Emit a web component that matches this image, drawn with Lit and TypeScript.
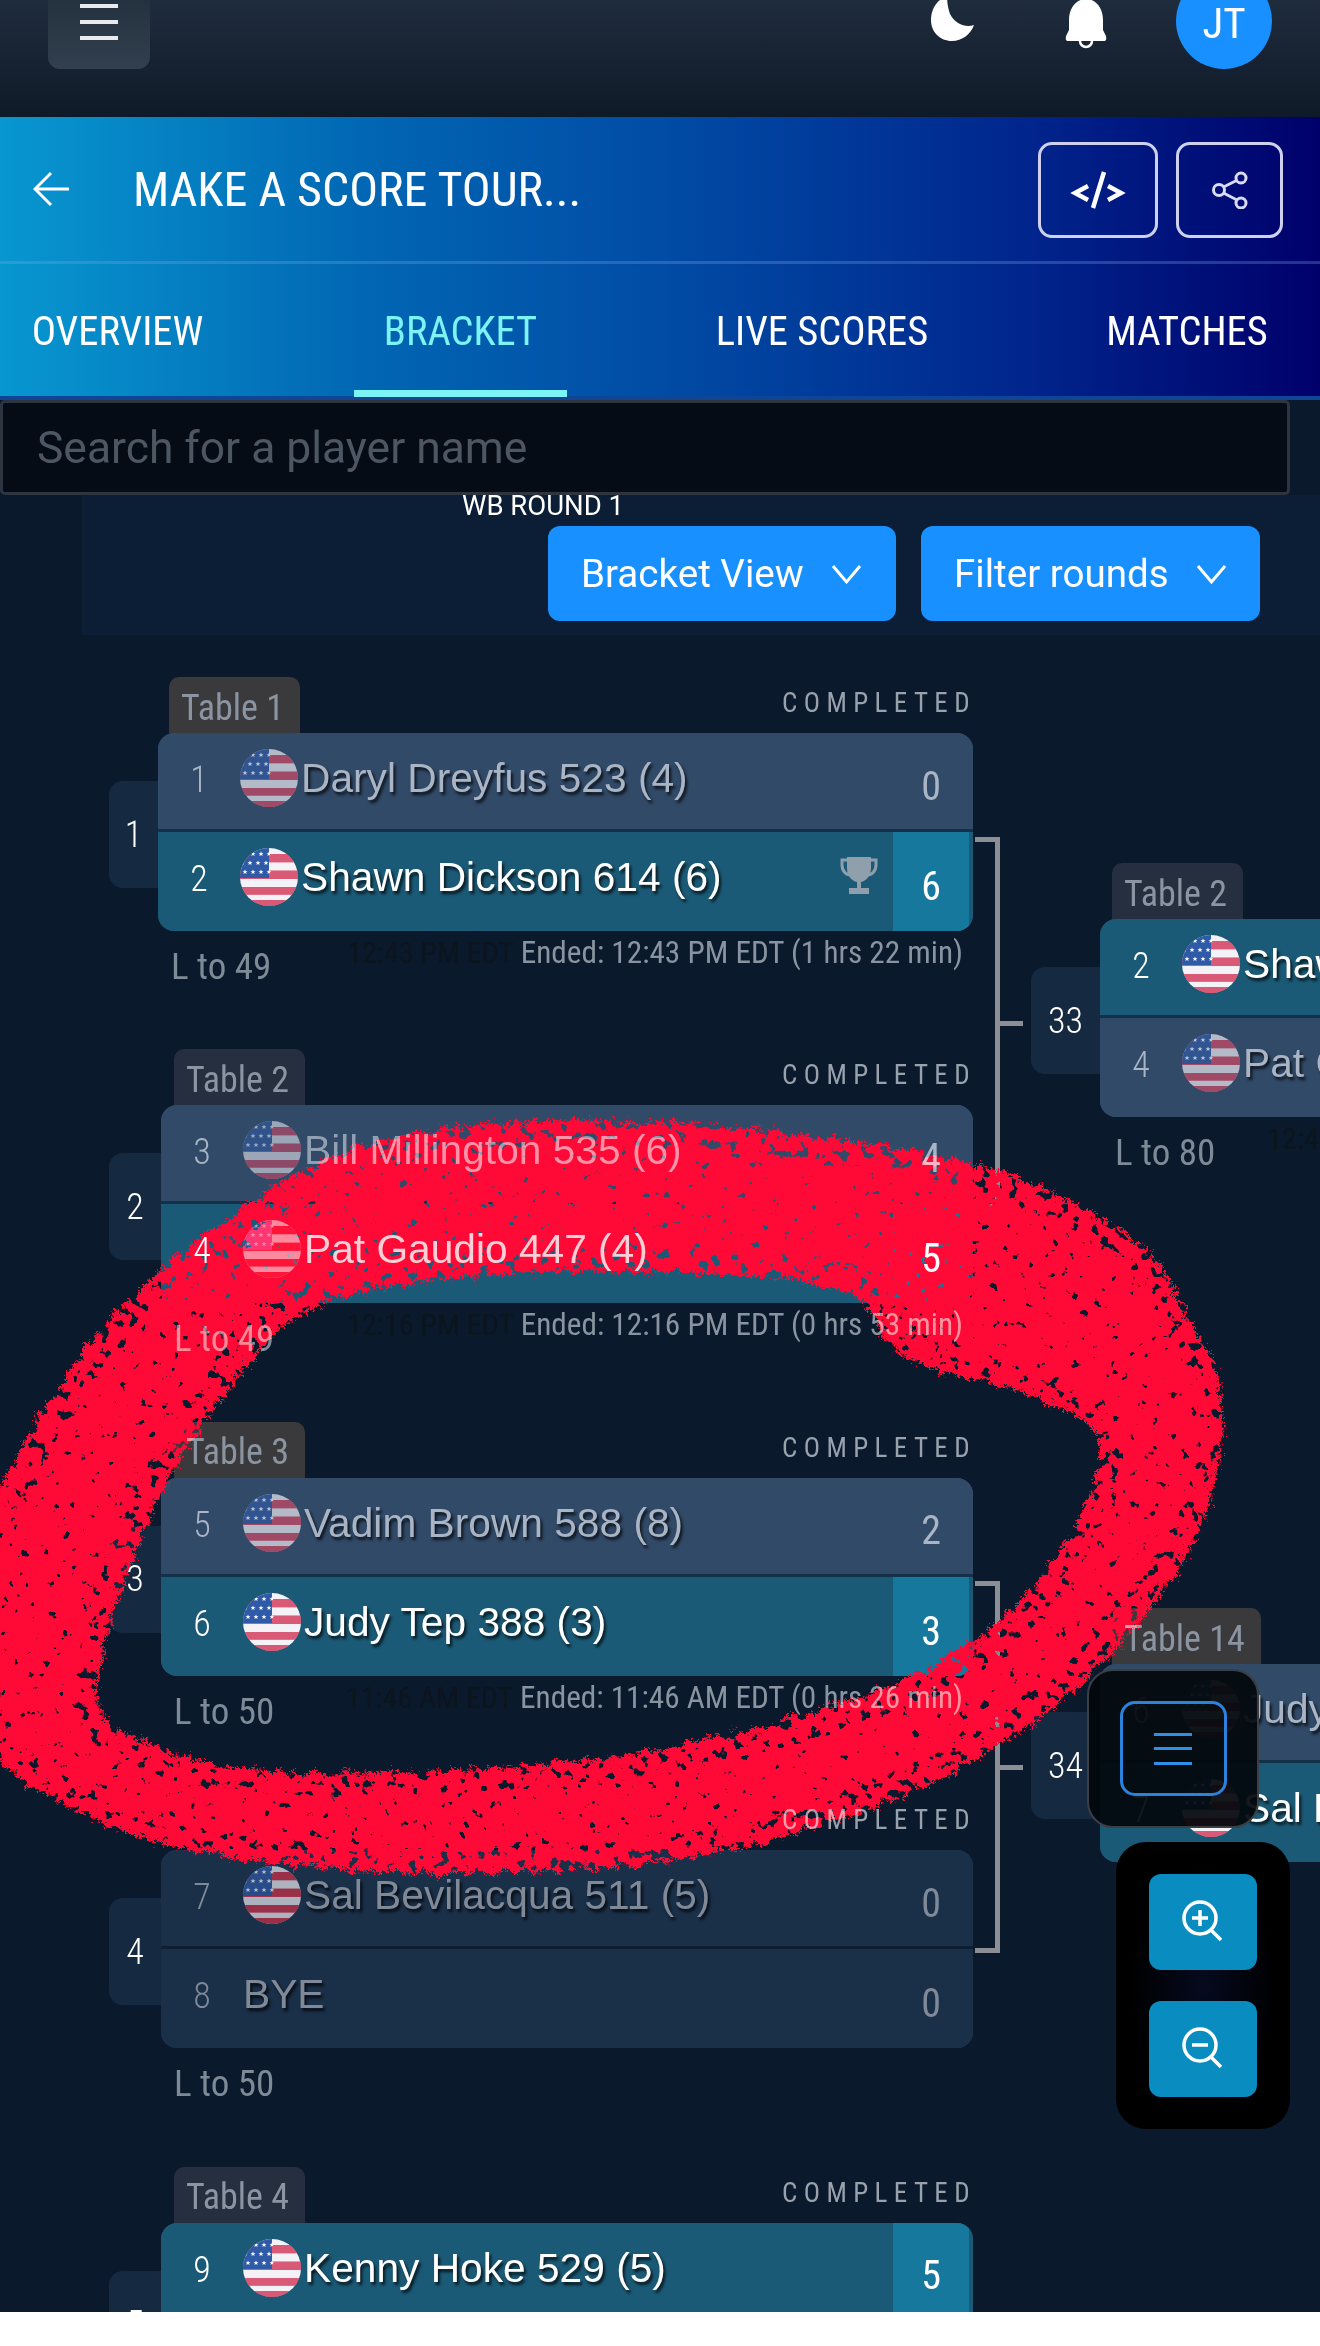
import { LitElement, html, css, svg } from "lit";
import { customElement } from "lit/decorators.js";

type P = { seed: string; name: string; score: string; win?: boolean; flag?: boolean; trophy?: boolean };
type M = { no: string; table: string; top: P; bottom: P; lto: string; dark: string; ended: string; cls?: string; status?: boolean };

const matches: M[] = [
  { no: "1", table: "Table 1", cls: "first", status: true, lto: "L to 49", dark: "12:43 PM EDT", ended: "Ended: 12:43 PM EDT (1 hrs 22 min)",
    top: { seed: "1", name: "Daryl Dreyfus 523 (4)", score: "0", flag: true },
    bottom: { seed: "2", name: "Shawn Dickson 614 (6)", score: "6", win: true, flag: true, trophy: true } },
  { no: "2", table: "Table 2", cls: "ghost", status: true, lto: "L to 49", dark: "12:16 PM EDT", ended: "Ended: 12:16 PM EDT (0 hrs 53 min)",
    top: { seed: "3", name: "Bill Millington 535 (6)", score: "4", flag: true },
    bottom: { seed: "4", name: "Pat Gaudio 447 (4)", score: "5", win: true, flag: true } },
  { no: "3", table: "Table 3", cls: "warm", status: true, lto: "L to 50", dark: "11:46 AM EDT", ended: "Ended: 11:46 AM EDT (0 hrs 26 min)",
    top: { seed: "5", name: "Vadim Brown 588 (8)", score: "2", flag: true },
    bottom: { seed: "6", name: "Judy Tep 388 (3)", score: "3", win: true, flag: true } },
  { no: "4", table: "", cls: "dim", status: true, lto: "L to 50", dark: "", ended: "",
    top: { seed: "7", name: "Sal Bevilacqua 511 (5)", score: "0", flag: true },
    bottom: { seed: "8", name: "BYE", score: "0" } },
  { no: "5", table: "Table 4", status: true, lto: "", dark: "", ended: "",
    top: { seed: "9", name: "Kenny Hoke 529 (5)", score: "5", win: true, flag: true },
    bottom: { seed: "", name: "", score: "" } },
];

const col2: M[] = [
  { no: "33", table: "Table 2", lto: "L to 80", dark: "12:44 PM EDT", ended: "",
    top: { seed: "2", name: "Shawn Dickson 614 (6)", score: "", win: true, flag: true },
    bottom: { seed: "4", name: "Pat Gaudio 447 (4)", score: "", flag: true } },
  { no: "34", table: "Table 14", cls: "warm", lto: "", dark: "", ended: "",
    top: { seed: "6", name: "Judy Tep 388 (3)", score: "", flag: true },
    bottom: { seed: "7", name: "Sal Bevilacqua 511 (5)", score: "", win: true, flag: true } },
];

const outer: [number, number][] = [[210,1228],[337,1146],[522,1118],[716,1123],[926,1150],[1052,1187],[1162,1256],[1179,1306],[1229,1385],[1212,1513],[1160,1600],[1095,1674],[1000,1750],[893,1800],[829,1824],[701,1859],[510,1875],[319,1870],[159,1849],[51,1800],[0,1766],[-30,1700],[-30,1550],[0,1485],[42,1412],[110,1316]];
const inner: [number, number][] = [[295,1306],[421,1279],[589,1270],[758,1274],[867,1293],[892,1362],[1010,1385],[1095,1421],[1103,1467],[1061,1559],[968,1655],[800,1720],[589,1765],[253,1779],[101,1729],[93,1674],[152,1504],[210,1412]];

function smooth(pts: [number, number][]): string {
  const mid = (a: [number, number], b: [number, number]) => `${(a[0] + b[0]) / 2} ${(a[1] + b[1]) / 2}`;
  let d = `M${mid(pts[0], pts[1])}`;
  for (let i = 1; i <= pts.length; i++) {
    const p = pts[i % pts.length];
    const n = pts[(i + 1) % pts.length];
    d += ` Q${p[0]} ${p[1]} ${mid(p, n)}`;
  }
  return d + " Z";
}

const star = "M0-2.6 .76-.8 2.5-.8 1.1.3 1.6 2.1 0 1.05-1.6 2.1-1.1.3-2.5-.8-.76-.8Z";
const flag = () => {
  const stars = [];
  for (let r = 0; r < 3; r++) for (let c = 0; c < 4; c++) {
    stars.push(svg`<path d=${star} fill="#fff" transform="translate(${5 + c * 8 + (r === 1 ? -3 : 0)} ${6 + r * 9})"/>`);
  }
  return html`<svg class="flag" viewBox="0 0 58 58"><defs><clipPath id="fc"><circle cx="29" cy="29" r="29"/></clipPath></defs>
    <g clip-path="url(#fc)"><rect width="58" height="58" fill="#f4f2f6"/>
    <rect y="6" width="58" height="8.3" fill="#d81f3a"/><rect y="22.6" width="58" height="8.3" fill="#d81f3a"/><rect y="39" width="58" height="7.6" fill="#d81f3a"/><rect y="52" width="58" height="6" fill="#d81f3a"/>
    <rect width="29" height="30" fill="#2f5aa8"/>${stars}</g></svg>`;
};

@customElement("app-root")
export class AppRoot extends LitElement {
  static styles = css`
    :host { display: block; width: 1320px; height: 2346px; background: #fff; overflow: hidden; font-family: Roboto, "Liberation Sans", sans-serif; font-stretch: 85%; }
    .page { position: relative; height: 2312px; overflow: hidden; background: #0a192c; color: #fff; }
    .over { position: relative; z-index: 5; mix-blend-mode: lighten; }
    .top { height: 117px; background: linear-gradient(#1f2c3d, #0f1a28); display: flex; align-items: flex-start; padding: 0 48px; box-sizing: border-box; overflow: hidden; }
    .burger { width: 102px; height: 69px; border-radius: 0 0 12px 12px; background: linear-gradient(#24313f, #323f4e); display: flex; justify-content: center; }
    .spacer { flex: 1; }
    .moon { width: 46px; height: 42px; margin-right: 88px; }
    .bell { width: 44px; height: 49px; margin-right: 68px; overflow: visible; }
    .avatar { width: 96px; height: 96px; margin-top: -27px; border-radius: 50%; background: #1890ff; font-size: 43px; display: flex; align-items: center; justify-content: center; padding-top: 4px; box-sizing: border-box; }
    .hero { height: 283px; background: linear-gradient(90deg, #0897d0 0%, #0166b3 28%, #014ca5 50%, #00258c 78%, #00006b 100%); border-bottom: 4px solid #0f4596; box-sizing: border-box; }
    .title-row { height: 147px; border-bottom: 3px solid rgba(120,170,230,.3); box-sizing: border-box; display: flex; align-items: center; padding-left: 33px; }
    .back { width: 36px; height: 36px; margin-right: 64px; }
    .title { font-size: 48px; flex: 1; }
    .icon-btn { height: 96px; border: 3px solid #cdd1ee; border-radius: 14px; box-sizing: border-box; display: flex; align-items: center; justify-content: center; margin-top: 2px; }
    .code { width: 120px; margin-right: 18px; }
    .share { width: 107px; margin-right: 37px; }
    .tabs { display: flex; height: 132px; }
    .tab { font-size: 40.5px; white-space: nowrap; display: flex; align-items: center; justify-content: center; box-sizing: border-box; padding-top: 1px; margin-bottom: -1px; }
    .tab.on { color: #7cf3f5; border-bottom: 7px solid #7cf3f5; padding-top: 8px; }
    .t1 { width: 235px; } .t2 { width: 213px; margin-left: 119px; } .t3 { width: 210px; margin-left: 150px; } .t4 { width: 156px; margin-left: 182px; }
    .search { height: 95px; }
    .search div { width: 1290px; height: 95px; box-sizing: border-box; border: 3px solid #2c3540; border-radius: 5px; background: #050c15; color: #4d5763; font-size: 44.4px; font-stretch: 100%; display: flex; align-items: center; padding-left: 34px; }
    .toolbar { margin-left: 82px; height: 140px; background: #0b1e35; position: relative; display: flex; justify-content: flex-end; align-items: flex-start; gap: 25px; padding: 31px 60px 0 0; box-sizing: border-box; }
    .round { position: absolute; left: 380px; top: -6px; font-size: 27.5px; font-stretch: 100%; }
    .dd { height: 95px; background: #1890ff; border-radius: 12px; font-size: 38.6px; font-stretch: 100%; display: flex; align-items: center; box-sizing: border-box; padding-left: 33px; gap: 27px; }
    .dd svg { width: 31px; height: 22px; }
    .dd.a { width: 348px; } .dd.b { width: 339px; }
    .bracket { display: flex; padding: 42px 0 0 109px; }
    .col { width: 864px; flex: none; }
    .match { height: 372.4px; display: flex; flex-direction: column; align-items: flex-end; }
    .head { width: 812px; height: 56px; flex: none; display: flex; justify-content: space-between; box-sizing: border-box; padding: 0 0 0 13px; }
    .first .head { width: 815px; padding-left: 11px; }
    .tag { background: #252f40; color: #8b94a1; font-size: 36px; border-radius: 10px 10px 0 0; padding: 5px 16px 0 12px; display: flex; align-items: center; height: 56px; box-sizing: border-box; }
    .first .tag, .warm .tag { background: #3a3a3d; }
    .status { font-size: 27px; letter-spacing: 6.4px; color: #98a1ac; margin: 10px -3px 0 0; }
    .line { display: flex; width: 100%; align-items: center; justify-content: flex-end; }
    .side { flex: 1; height: 107px; margin-top: 5px; background: #152a41; border-radius: 14px 0 0 14px; display: flex; align-items: center; justify-content: center; font-size: 36px; font-weight: 300; }
    .card { width: 812px; flex: none; height: 198px; border-radius: 16px; overflow: hidden; background: #314a68; display: flex; flex-direction: column; }
    .first .card { width: 815px; }
    .row { height: 99px; flex: none; display: flex; align-items: flex-start; box-sizing: border-box; padding-top: 16px; background: #314a68; color: #a9b4c4; }
    .row:first-child { border-bottom: 3px solid #133249; }
    .row.win { background: #1b5a76; color: #fff; }
    .dim .row { background: #1a2f48; color: #7f8997; }
    .dim .row:first-child { border-bottom-color: #0d2033; }
    .seed { width: 82px; flex: none; text-align: center; font-size: 36px; font-weight: 300; line-height: 58px; margin-top: 2px; }
    .flag { width: 58px; height: 58px; display: block; }
    .flagbox { flex: none; margin-right: 3px; opacity: .68; }
    .win .flagbox { opacity: 1; }
    .ghost .flagbox { opacity: .55; }
    .name { flex: 1; font-family: "Liberation Sans", Arial, sans-serif; font-stretch: normal; font-size: 40.7px; line-height: 58px; text-shadow: 2px 3px 3px rgba(0,0,0,.75); white-space: nowrap; }
    .ghost .name { position: relative; z-index: 5; mix-blend-mode: lighten; opacity: .8; }
    .trophy { width: 38px; height: 37px; flex: none; margin: 9px 15px 0 0; }
    .score { width: 76px; flex: none; margin: -16px 4px 0 0; align-self: stretch; display: flex; align-items: center; justify-content: center; font-size: 40px; padding-top: 10px; box-sizing: border-box; }
    .win .score { background: #16789c; }
    .foot { width: 812px; display: flex; justify-content: space-between; color: #7f8a97; box-sizing: border-box; padding: 0 10px 0 13px; }
    .first .foot { width: 815px; }
    .lto { font-size: 37px; margin-top: 14px; line-height: 44px; }
    .end { font-size: 31.2px; line-height: 40px; margin-top: 2px; color: #8a94a0; display: flex; }
    .end i { font-style: normal; font-size: 30px; color: #0c141c; margin-right: 7px; }
    .conn { width: 48px; flex: none; margin-left: 2px; padding-top: 160px; display: flex; flex-direction: column; gap: 372px; }
    .link { display: flex; align-items: center; }
    .brk { width: 25px; height: 372px; box-sizing: border-box; border: 5px solid #8b8e95; border-left: 0; }
    .stub { width: 23px; height: 5px; background: #8b8e95; }
    .col2 { flex: none; width: 900px; margin-left: 8px; padding-top: 186px; }
    .col2 .match { width: 900px; height: 745px; align-items: flex-start; }
    .col2 .head { margin-left: 69px; padding-left: 12px; }
    .col2 .line { justify-content: flex-start; }
    .col2 .side { flex: none; width: 69px; }
    .col2 .foot { margin-left: 69px; padding-left: 15px; justify-content: flex-start; gap: 52px; }
    .col2 .end i { margin: 0; }
    .scribble { position: absolute; z-index: 2; left: 0; top: 0; width: 1320px; height: 2312px; pointer-events: none; }
    .fab { position: absolute; z-index: 10; left: 1087px; top: 1669px; width: 172px; height: 159px; background: rgba(2,7,12,.93); border: 2px solid #3a3f45; border-radius: 26px; box-sizing: border-box; display: flex; align-items: center; justify-content: center; }
    .fab div { width: 107px; height: 95px; border: 3px solid #2a82dc; border-radius: 15px; box-sizing: border-box; display: flex; align-items: center; justify-content: center; }
    .zoom { position: absolute; z-index: 10; left: 1116px; top: 1842px; width: 174px; height: 287px; background: radial-gradient(#050a1e, #000 60%); border-radius: 30px; display: flex; flex-direction: column; align-items: center; justify-content: center; gap: 31px; }
    .zoom div { width: 108px; height: 96px; background: #098cbf; border-radius: 12px; display: flex; align-items: center; justify-content: center; }
  `;

  private row(p: P) {
    return html`<div class="row ${p.win ? "win" : ""}">
      <span class="seed over">${p.seed}</span>
      ${p.flag ? html`<span class="flagbox over">${flag()}</span>` : ""}
      <span class="name">${p.name}</span>
      ${p.trophy ? html`<svg class="trophy" viewBox="0 0 38 37"><path fill="none" stroke="#8fa0ac" stroke-width="3" d="M8 3H2v5c0 6 4 10 9 10M30 3h6v5c0 6-4 10-9 10"/><path fill="#8fa0ac" d="M7 0h24v11c0 8-5 13-10 14v6h8v6H9v-6h8v-6C12 24 7 19 7 11z"/></svg>` : ""}
      ${p.score ? html`<span class="score"><span class="over">${p.score}</span></span>` : ""}
    </div>`;
  }

  private match(m: M) {
    return html`<div class="match ${m.cls ?? ""}">
      <div class="head">
        ${m.table ? html`<span class="tag"><span class="over">${m.table}</span></span>` : html`<span></span>`}
        ${m.status ? html`<span class="status over">COMPLETED</span>` : ""}
      </div>
      <div class="line"><div class="side"><span class="over">${m.no}</span></div>
        <div class="card">${this.row(m.top)}${this.row(m.bottom)}</div></div>
      <div class="foot"><span class="lto over">${m.lto}</span><span class="end">${m.dark ? html`<i>${m.dark}</i>` : ""}<span class="over">${m.ended}</span></span></div>
    </div>`;
  }

  render() {
    return html`<div class="page">
      <div class="top">
        <div class="burger"><svg width="38" height="41" viewBox="0 0 38 41" fill="#e8eaed"><rect y="4" width="38" height="4"/><rect y="20" width="38" height="4"/><rect y="36" width="38" height="4"/></svg></div>
        <div class="spacer"></div>
        <svg class="moon" viewBox="0 0 46 42"><path fill="#fff" d="M17-4C6 0 1 10 1 20 1 32 10 41 22 41 32 41 41 34 44 25 36 28 25 24 20 14 18 8 17 2 17-4Z"/></svg>
        <svg class="bell" viewBox="0 0 44 49"><path fill="#fff" d="M5 20C5 8 12-1 22-1S39 8 39 20V30L42 36Q43 41 40 41H4Q1 41 2 36L5 30Z"/><path fill="none" stroke="#fff" stroke-width="2.500" d="M16 41a6 6 0 0 0 12 0"/></svg>
        <div class="avatar">JT</div>
      </div>
      <div class="hero">
        <div class="title-row">
          <svg class="back" viewBox="0 0 36 36" fill="none" stroke="#fff" stroke-width="3"><path d="M18 2 2 18l16 16M2 18h34"/></svg>
          <div class="title">MAKE A SCORE TOUR...</div>
          <div class="icon-btn code"><svg width="56" height="38" viewBox="0 0 56 38" fill="none" stroke="#fff" stroke-width="4.500"><path d="M18 15 5 22l13 7M38 15l13 7-13 7M34 1 23 37"/></svg></div>
          <div class="icon-btn share"><svg width="38" height="38" viewBox="0 0 38 38" fill="none" stroke="#d8dbf2" stroke-width="3"><circle cx="30" cy="7" r="5"/><circle cx="8" cy="19" r="5.500"/><circle cx="30" cy="32" r="5"/><path d="m12.500 16 13-6.500M12.500 22l13.500 7"/></svg></div>
        </div>
        <div class="tabs">
          <div class="tab t1">OVERVIEW</div><div class="tab t2 on">BRACKET</div><div class="tab t3">LIVE SCORES</div><div class="tab t4">MATCHES</div>
        </div>
      </div>
      <div class="search"><div>Search for a player name</div></div>
      <div class="toolbar">
        <span class="round">WB ROUND 1</span>
        <div class="dd a">Bracket View<svg viewBox="0 0 31 22" fill="none" stroke="#fff" stroke-width="3"><path d="m2 3 13.500 16L29 3"/></svg></div>
        <div class="dd b">Filter rounds<svg viewBox="0 0 31 22" fill="none" stroke="#fff" stroke-width="3"><path d="m2 3 13.500 16L29 3"/></svg></div>
      </div>
      <div class="bracket">
        <div class="col">${matches.map((m) => this.match(m))}</div>
        <div class="conn">
          <div class="link"><div class="brk"></div><div class="stub"></div></div>
          <div class="link"><div class="brk"></div><div class="stub"></div></div>
        </div>
        <div class="col2">${col2.map((m) => this.match(m))}</div>
      </div>
      <svg class="scribble" viewBox="0 0 1320 2312">
        <defs><filter id="brush" filterUnits="userSpaceOnUse" x="-40" y="1080" width="1360" height="830" color-interpolation-filters="sRGB">
          <feTurbulence type="fractalNoise" baseFrequency="0.1" numOctaves="3" seed="7" result="n"/>
          <feTurbulence type="fractalNoise" baseFrequency="0.45" numOctaves="2" seed="3" result="fine"/>
          <feDisplacementMap in="SourceGraphic" in2="n" scale="18" xChannelSelector="R" yChannelSelector="G" result="d0"/>
          <feDisplacementMap in="d0" in2="fine" scale="12" xChannelSelector="R" yChannelSelector="G" result="d"/>
          <feColorMatrix in="n" type="matrix" values="0 0 0 0 0 0 0 0 0 0 0 0 0 0 0 20 0 0 0 -6.9" result="mask"/>
          <feComposite in="d" in2="mask" operator="in" result="speck"/>
          <feMorphology in="d" operator="erode" radius="18" result="core"/>
          <feColorMatrix in="n" type="matrix" values="0 0 0 0 0 0 0 0 0 0 0 0 0 0 0 20 0 0 0 -4.8" result="mask2"/>
          <feComposite in="core" in2="mask2" operator="in" result="corespeck"/>
          <feMerge><feMergeNode in="speck"/><feMergeNode in="corespeck"/></feMerge>
        </filter></defs>
        <path d="${smooth(outer)} ${smooth(inner)}" fill="#ff0a37" fill-rule="evenodd" filter="url(#brush)"/>
      </svg>
      <div class="fab"><div><svg width="38" height="32" viewBox="0 0 38 32" fill="#2f8fe8"><rect width="38" height="3"/><rect y="14" width="38" height="3"/><rect y="29" width="38" height="3"/></svg></div></div>
      <div class="zoom">
        <div><svg width="44" height="44" viewBox="0 0 44 44" fill="none" stroke="#fff" stroke-width="3.500"><circle cx="19" cy="18" r="16"/><path d="M19 10v16M11 18h16M30 30l10 10"/></svg></div>
        <div><svg width="44" height="44" viewBox="0 0 44 44" fill="none" stroke="#fff" stroke-width="3.500"><circle cx="19" cy="18" r="16"/><path d="M11 18h16M30 30l10 10"/></svg></div>
      </div>
    </div>`;
  }
}
